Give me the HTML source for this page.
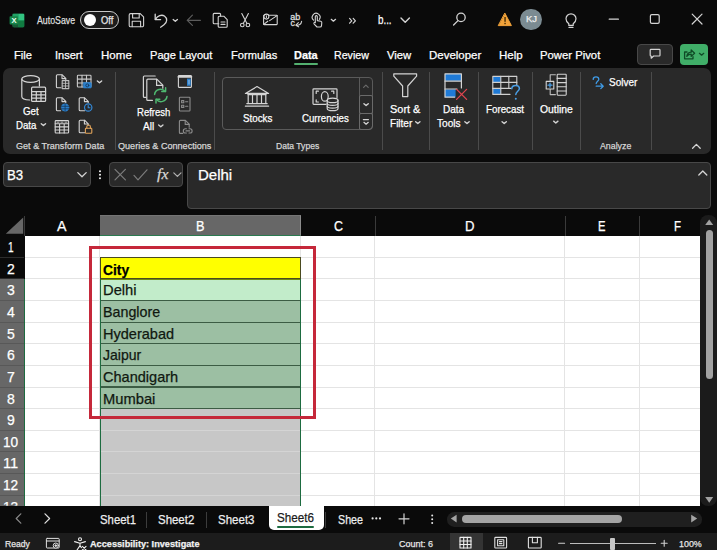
<!DOCTYPE html>
<html lang="en"><head><meta charset="utf-8"><title>Excel</title>
<style>
html,body{margin:0;padding:0;background:#0a0a0a;}
#app{position:relative;width:717px;height:550px;overflow:hidden;background:#0a0a0a;font-family:"Liberation Sans",sans-serif;}
#app div{position:absolute;box-sizing:border-box;}
.t{position:absolute;white-space:nowrap;transform-origin:0 50%;-webkit-text-stroke:0.25px currentColor;}
#ribbon{left:3px;top:67.6px;width:707.9px;height:86.5px;background:#292929;border-radius:7px;}
.sep{top:72px;width:1px;height:77.5px;background:#4b4b4b;}
#gallery{left:222px;top:77.4px;width:150.8px;height:52.8px;border:1px solid #5a5a5a;border-radius:4px;}
.box{background:#292929;border:1px solid #484848;border-radius:4px;}
#toggle{left:80.3px;top:11.4px;width:38.7px;height:17.8px;border:1.2px solid #c8c8c8;border-radius:9px;background:#1c1c1c;}
#knob{left:2.7px;top:1.7px;width:12.4px;height:12.4px;border-radius:6.2px;background:#fff;}
#share{left:680px;top:43.5px;width:28px;height:21.5px;background:#40ae68;border-radius:4px;}
#colhdr{left:0;top:214.6px;width:700px;height:21px;background:#0a0a0a;}
#grid{left:24.6px;top:235.6px;width:675.6px;height:270.2px;background:#fff;overflow:hidden;}
.gh{left:0;width:676px;height:1px;background:#e4e4e4;}
.gv{top:0;width:1px;height:271px;background:#e4e4e4;}
#rowhdr{left:0;top:235.6px;width:24.6px;height:270.2px;background:#0a0a0a;overflow:hidden;}
.rs{left:0;width:24.6px;background:#676767;border-right:1.3px solid #1d6b40;}
.rl{left:0;width:24px;height:1px;background:#2c2c2c;}
#tabbar{left:0;top:505.8px;width:717px;height:27.2px;background:#0a0a0a;}
#status{left:0;top:533px;width:717px;height:17px;background:#1c1c1c;}

</style></head>
<body>
<div id="app">
<!-- TITLE BAR -->
<div id="toggle"><div id="knob"></div></div>
<div id="avatar" style="left:520.4px;top:8.6px;width:21.4px;height:21.4px;border-radius:11px;background:#7b8b92;"></div>
<!-- TABS -->
<div id="dataline" style="left:294.3px;top:62.6px;width:23.8px;height:2px;background:#53b06f;border-radius:1px;"></div>
<div id="comment" class="box" style="left:636.8px;top:43.5px;width:36.2px;height:21.5px;"></div>
<div id="share"></div>
<!-- RIBBON -->
<div id="ribbon"></div>
<div class="sep" style="left:115px"></div>
<div class="sep" style="left:214.3px"></div>
<div class="sep" style="left:381.9px"></div>
<div class="sep" style="left:428.8px"></div>
<div class="sep" style="left:478.4px"></div>
<div class="sep" style="left:531.8px"></div>
<div class="sep" style="left:580.1px"></div>
<div class="sep" style="left:651.3px"></div>
<div id="gallery">
  <div style="left:136px;top:-1px;width:1px;height:52.8px;background:#5a5a5a"></div>
  <div style="left:136px;top:17px;width:13.8px;height:18.4px;border:1px solid #6a6a6a;border-radius:2px"></div>
  <div style="left:136px;top:34.4px;width:13.8px;height:17.4px;border:1px solid #6a6a6a;border-radius:2px 2px 4px 2px"></div>
</div>
<!-- FORMULA BAR -->
<div id="namebox" class="box" style="left:2.7px;top:162.3px;width:88.4px;height:24.6px;"></div>
<div id="fxbox" class="box" style="left:109.3px;top:162.3px;width:74.2px;height:24.6px;"></div>
<div id="formula" class="box" style="left:187.3px;top:162.3px;width:523.3px;height:46.4px;"></div>
<!-- SHEET -->
<div id="colhdr">
  <div style="left:99.8px;top:0;width:201.2px;height:21px;background:#676767;border-top:1px solid #757575;border-right:1px solid #8c8c8c;border-bottom:1.2px solid #2a7a50;"></div>
  <div style="left:24.2px;top:1px;width:1px;height:20px;background:#3a3a3a"></div>
  <div style="left:374.6px;top:1px;width:1px;height:20px;background:#3a3a3a"></div>
  <div style="left:564.6px;top:1px;width:1px;height:20px;background:#3a3a3a"></div>
  <div style="left:639.4px;top:1px;width:1px;height:20px;background:#3a3a3a"></div>
</div>
<div id="rowhdr">
  <div class="rs" style="top:43.3px;height:227px;"></div>
  <div class="rl" style="top:21.13px;background:#2c2c2c"></div><div class="rl" style="top:42.76px;background:#2c2c2c"></div><div class="rl" style="top:64.39px;background:#585858"></div><div class="rl" style="top:86.02px;background:#585858"></div><div class="rl" style="top:107.65px;background:#585858"></div><div class="rl" style="top:129.28px;background:#585858"></div><div class="rl" style="top:150.91px;background:#585858"></div><div class="rl" style="top:172.54px;background:#585858"></div><div class="rl" style="top:194.17px;background:#585858"></div><div class="rl" style="top:215.80px;background:#585858"></div><div class="rl" style="top:237.43px;background:#585858"></div><div class="rl" style="top:259.06px;background:#585858"></div>
</div>
<div id="grid">
  <div class="gh" style="top:21.13px"></div><div class="gh" style="top:42.76px"></div><div class="gh" style="top:64.39px"></div><div class="gh" style="top:86.02px"></div><div class="gh" style="top:107.65px"></div><div class="gh" style="top:129.28px"></div><div class="gh" style="top:150.91px"></div><div class="gh" style="top:172.54px"></div><div class="gh" style="top:194.17px"></div><div class="gh" style="top:215.80px"></div><div class="gh" style="top:237.43px"></div><div class="gh" style="top:259.06px"></div><div class="gv" style="left:74.90px"></div><div class="gv" style="left:275.90px"></div><div class="gv" style="left:349.90px"></div><div class="gv" style="left:539.90px"></div><div class="gv" style="left:614.90px"></div>
  <!-- selected column grey -->
  <div style="left:75.2px;top:43.3px;width:201.2px;height:227px;background:#c7c7c7;"></div>
  <div class="gh" style="top:172.54px;left:75.2px;width:201.2px;background:#d4d4d4"></div><div class="gh" style="top:194.17px;left:75.2px;width:201.2px;background:#d4d4d4"></div><div class="gh" style="top:215.80px;left:75.2px;width:201.2px;background:#d4d4d4"></div><div class="gh" style="top:237.43px;left:75.2px;width:201.2px;background:#d4d4d4"></div><div class="gh" style="top:259.06px;left:75.2px;width:201.2px;background:#d4d4d4"></div>
  <div style="left:75.2px;top:21.7px;width:201.2px;height:21.7px;background:#ffff00;border:1px solid #4a4a20;"></div>
  <div style="left:75.2px;top:43.3px;width:201.2px;height:21.8px;background:#c2ecca;border:1px solid #3c5c44;border-top-color:#6f8a10;"></div>
  <div style="left:75.2px;top:64.39px;width:201.2px;height:22.63px;background:#9cbfa3;border:1px solid #3c5c44;"></div><div style="left:75.2px;top:86.02px;width:201.2px;height:22.63px;background:#9cbfa3;border:1px solid #3c5c44;"></div><div style="left:75.2px;top:107.65px;width:201.2px;height:22.63px;background:#9cbfa3;border:1px solid #3c5c44;"></div><div style="left:75.2px;top:129.28px;width:201.2px;height:22.63px;background:#9cbfa3;border:1px solid #3c5c44;"></div><div style="left:75.2px;top:150.91px;width:201.2px;height:22.63px;background:#9cbfa3;border:1px solid #3c5c44;"></div>
  <div style="left:75.2px;top:43.3px;width:1.3px;height:227px;background:#1d6b40;"></div>
  <div style="left:275.4px;top:43.3px;width:1.3px;height:227px;background:#1d6b40;"></div>
  <div id="redbox" style="left:64.4px;top:10.6px;width:227px;height:172.6px;border:3px solid #c5283a;"></div>
</div>
<!-- V SCROLL -->
<div id="vscroll" style="left:700.2px;top:214.6px;width:16.8px;height:291.2px;background:#1b1b1b;border-radius:8px;">
  <div style="left:5.4px;top:15px;width:7.4px;height:149px;background:#a2a2a2;border-radius:4px;"></div>
</div>
<!-- TAB BAR -->
<div id="tabbar">
  <div style="left:146.2px;top:6px;width:1px;height:16px;background:#3c3c3c"></div>
  <div style="left:206px;top:6px;width:1px;height:16px;background:#3c3c3c"></div>
  <div style="left:324.6px;top:6px;width:1px;height:16px;background:#3c3c3c"></div>
  <div id="activetab" style="left:269.4px;top:-0.2px;width:55px;height:23.9px;background:#fff;border-radius:0 0 5px 5px;"></div>
  <div style="left:277.4px;top:19.9px;width:37px;height:2px;background:#1d6b40;border-radius:1px"></div>
  <div id="hscroll" style="left:446.5px;top:6.2px;width:255.5px;height:14.6px;background:#1f1f1f;border-radius:7.3px;">
    <div style="left:15px;top:3.2px;width:160.6px;height:7.6px;background:#a4a4a4;border-radius:4px;"></div>
  </div>
</div>
<!-- STATUS -->
<div id="status">
  <div style="left:449.6px;top:0;width:33.6px;height:18.2px;background:#343434"></div>
  <div style="left:569.6px;top:9.9px;width:86.6px;height:1px;background:#bdbdbd"></div>
  <div style="left:610.2px;top:5px;width:4.6px;height:12px;background:#c8c8c8;border-radius:1px"></div>
</div>
<svg id="icons" width="717" height="550" viewBox="0 0 717 550" style="position:absolute;left:0;top:0" fill="none" stroke="#d4d4d4" stroke-width="1.1" stroke-linecap="round" stroke-linejoin="round">
<!-- ===== title bar ===== -->
<g id="xl" stroke="none">
  <rect x="12.6" y="13.8" width="11.6" height="13.4" rx="1.4" fill="#21a366"/>
  <rect x="18.4" y="13.8" width="5.8" height="6.7" fill="#33c481"/>
  <rect x="18.4" y="20.5" width="5.8" height="6.7" fill="#107c41"/>
  <rect x="12.6" y="13.8" width="5.8" height="6.7" fill="#21a366"/>
  <rect x="12.6" y="20.5" width="5.8" height="6.7" fill="#185c37"/>
  <rect x="9.6" y="16.200" width="8.4" height="8.3" rx="0.9" fill="#17864a"/>
  <text x="14.1" y="23" font-family="Liberation Sans, sans-serif" font-weight="700" font-size="7.6" fill="#eafff2" text-anchor="middle">X</text>
</g>
<g id="save">
  <path d="M130.6 13.6h9.6l3.4 3.2v8.6a1.4 1.4 0 0 1-1.4 1.4h-11.6a1.4 1.4 0 0 1-1.4-1.4v-10.4a1.4 1.4 0 0 1 1.400-1.400z"/>
  <path d="M132.6 13.8v4.200h6.600v-4.200"/>
  <path d="M132.2 26.600v-5.400h8.400v5.400"/>
</g>
<g id="undo" stroke-width="1.3">
  <path d="M155.200 14.200v5.400h5.400"/>
  <path d="M155.400 19.400c2.200-3.600 6.200-5.200 9-3.400 3.200 2.200 3 6.400-0.400 8.800l-3.400 2.400"/>
</g>
<path d="M173.15 19.55l2.150 1.800 2.150-1.800" stroke-width="1.3"/>
<g id="redo" stroke="#5c5c5c" stroke-width="1.2">
  <path d="M187.400 20.300h13"/><path d="M192.400 15.200l-5.100 5.100 5.100 5.100"/>
</g>
<g id="paste">
  <path d="M218.800 23.800h-4.600a1 1 0 0 1-1-1v-8.400a1 1 0 0 1 1-1h5.400a1 1 0 0 1 1 1v1.600"/>
  <path d="M219.200 16.200h4.600l3.400 3.400v6.600a1 1 0 0 1-1 1h-7a1 1 0 0 1-1-1v-9a1 1 0 0 1 1-1z"/>
  <path d="M221 22h4M221 24.400h4"/>
</g>
<g id="cut">
  <path d="M241.800 13.600l5 9.600M248.400 13.600l-5 9.600"/>
  <circle cx="242.300" cy="25" r="1.800"/><circle cx="247.900" cy="25" r="1.800"/>
</g>
<g id="mail">
  <rect x="263.600" y="15.200" width="13.600" height="9.400" rx="0.600"/>
  <path d="M269.600 20.600l7.400-5M263.800 24.400l4-3.200"/>
  <circle cx="266.400" cy="16.600" r="2.500" fill="#0a0a0a"/><path d="M266.400 15.800v1.600"/>
</g>
<g id="abc" stroke="#d8d8d8" stroke-width="0.300" fill="#e0e0e0" font-family="Liberation Sans, sans-serif" font-size="8.800">
  <text x="290.200" y="19.900" textLength="10" lengthAdjust="spacingAndGlyphs">ab</text><text x="290.400" y="26.300">c</text>
</g>
<path d="M296.200 25.200c2.800 0.400 5-0.800 5.400-3.800M298.400 22.600l-2.600 2.600 2.800 1.600" stroke-width="1.100"/>
<g id="touch">
  <path d="M313.600 20.200a3.900 3.900 0 1 1 5.800-0.800"/>
  <path d="M315.300 22.800v-6.200a1 1 0 0 1 2 0v4l3.400 0.700a1.400 1.400 0 0 1 1.100 1.500l-0.300 2.800a1.500 1.500 0 0 1-1.500 1.400h-3l-3-3.200a0.900 0.900 0 0 1 1.300-1.200z"/>
</g>
<path d="M331.25 19.35l2.150 1.800 2.150-1.800" stroke-width="1.300"/>
<path d="M349.600 18.400l2.200 2.400-2.200 2.400M353.200 18.400l2.200 2.400-2.200 2.400" stroke-width="1.200"/>
<path d="M401 18l4.200 4.200 4.200-4.200" stroke-width="1.400"/>
<g id="search" stroke-width="1.300"><circle cx="461" cy="17.400" r="4.200"/><path d="M458 20.600l-4.400 4.400"/></g>
<g id="warn" stroke="none"><path d="M505 13.400l6.400 12.200h-12.800z" fill="#f2a33a" stroke="#f2a33a" stroke-width="1"/><rect x="504.400" y="17" width="1.300" height="4.800" fill="#3a2400"/><rect x="504.400" y="22.800" width="1.300" height="1.400" fill="#3a2400"/></g>
<g id="bulb" stroke-width="1.200"><path d="M568.800 23.800c-2-1.600-2.800-3-2.800-5a5 5 0 0 1 10 0c0 2-0.800 3.400-2.800 5v1.600h-4.400z"/><path d="M569 27.400h4"/></g>
<path d="M609.200 19.200h9.200" stroke-width="1.200"/>
<rect x="650.400" y="14.600" width="8.800" height="8.800" rx="1.400" stroke-width="1.200"/>
<path d="M692.200 14.200l9.800 9.800M702 14.200l-9.800 9.800" stroke-width="1.200"/>
<!-- comment / share -->
<path d="M651 49.400h8.200a0.800 0.800 0 0 1 0.800 0.800v5a0.800 0.800 0 0 1-0.800 0.800h-5.600l-2.400 2.200v-2.200h-0.200a0.800 0.800 0 0 1-0.800-0.800v-5a0.800 0.800 0 0 1 0.800-0.800z" stroke-width="1.200"/>
<g stroke="#0f4a26" stroke-width="1.300"><path d="M687 52h-2.400v6.800h8.400v-2.200"/><path d="M686.800 56.400c0.400-2.600 2-4 4.400-4.200v-2.200l3.400 3.200-3.400 3.200v-2.200c-1.800 0-3.200 0.600-4.400 2.200z"/><path d="M699.45 53.35l2.150 1.800 2.150-1.800"/></g>
<!-- ===== ribbon icons ===== -->
<g id="getdata" stroke-width="1.2">
  <ellipse cx="30.600" cy="79" rx="8.800" ry="3.300"/>
  <path d="M21.800 79v17.400c0 1.800 3.400 3.400 8 3.600M39.400 79v7"/>
  <rect x="31.600" y="87.200" width="14" height="14.200" rx="1" fill="#292929"/>
  <path d="M31.600 91.600h14M31.600 94.900h14M31.600 98.200h14M36.300 91.600v9.800M41 91.600v9.800"/>
</g>
<g id="fromtext"><path d="M61 87.800h-3.600a1 1 0 0 1-1-1v-11a1 1 0 0 1 1-1h4.800l3.600 3.600v1.800"/><path d="M62 75v3.600h3.600"/>
  <rect x="62.200" y="80.600" width="6.600" height="8" fill="#292929" stroke="#bdbdbd"/><path d="M62.200 83.300h6.600M62.200 86h6.600M65.500 80.600v8" stroke="#bdbdbd" stroke-width="0.900"/></g>
<g id="fromweb"><path d="M60.600 110.800h-3.200a1 1 0 0 1-1-1v-11a1 1 0 0 1 1-1h4.800l3.600 3.600v1"/><path d="M62 98v3.600h3.600"/>
  <circle cx="65.100" cy="107.500" r="3.700" fill="#2b7fcb" stroke="#2b7fcb" stroke-width="0.600"/><path d="M61.600 106.300h7M61.600 108.800h7M65.100 104v7" stroke="#14385c" stroke-width="0.800"/></g>
<g id="fromtable"><rect x="55.200" y="120.600" width="13.400" height="12.400" rx="0.800"/><path d="M55.200 123.800h13.400M55.200 126.900h13.400M55.200 130h13.400M59.600 123.800v9.200M64.200 123.800v9.200"/><path d="M57 122.200h2M61 122.200h2M65 122.200h2" stroke-width="0.800"/></g>
<g id="frompic"><rect x="77.400" y="75.200" width="13.600" height="11.800" rx="0.800" stroke="#c8c8c8"/><path d="M77.400 79.100h13.600M77.400 83h13.600M82 75.200v11.800M86.500 75.200v11.800" stroke="#c8c8c8"/>
  <rect x="83.300" y="82.600" width="8" height="5.400" rx="0.800" fill="#2b7fcb" stroke="#2b7fcb" stroke-width="0.600"/><circle cx="87.300" cy="85.400" r="1.500" stroke="#14385c" stroke-width="0.900"/></g>
<path d="M97.35 80.95l2.150 1.800 2.150-1.800" stroke-width="1.400"/>
<g id="recent"><path d="M84.600 110.800h-4.400a1 1 0 0 1-1-1v-11a1 1 0 0 1 1-1h4.400l3.600 3.600v1"/><path d="M84.400 98v3.600h3.600"/>
  <circle cx="88.200" cy="107.500" r="3.700" fill="#292929" stroke="#3388d6" stroke-width="1.200"/><path d="M88.200 105.500v2.200h1.800" stroke="#3388d6"/></g>
<g id="existing"><path d="M84.800 132.800h-4.600a1 1 0 0 1-1-1v-10.600a1 1 0 0 1 1-1h4.400l3.600 3.600v1.400"/><path d="M84.400 120.400v3.600h3.600"/>
  <rect x="85.400" y="128.200" width="6.400" height="5" rx="0.700" stroke="#e2a45a" fill="#292929"/><path d="M86.800 128.200v-1.400a1.800 1.800 0 0 1 3.600 0v1.400" stroke="#e2a45a"/></g>
<path d="M41.25 123.75l2.150 1.800 2.150-1.800" stroke-width="1.400"/>
<g id="refresh" stroke-width="1.200"><path d="M146 97.400h-1.600a1 1 0 0 1-1-1v-19.400a1 1 0 0 1 1-1h10.800"/>
  <path d="M152.400 100.400h-4.600a1 1 0 0 1-1-1v-19.200a1 1 0 0 1 1-1h9l6 6v3"/><path d="M156.600 79.400v6h6"/>
  <g stroke="#4fb870" stroke-width="1.500"><path d="M154.600 94.400a6 6 0 0 1 10.600-3M167 96.400a6 6 0 0 1-10.600 3"/><path d="M165.600 87.800v3.800h-3.800M156 103v-3.800h3.800"/></g></g>
<path d="M158.65 124.95l2.150 1.800 2.150-1.800" stroke-width="1.400"/>
<g id="qc"><rect x="178.400" y="75.600" width="13" height="11.800" rx="0.600"/><path d="M178.400 76.800h13" stroke-width="1.800"/><rect x="187" y="78.600" width="3.800" height="7.200" fill="#2b7fcb" stroke="none"/><path d="M189 80.400v3.600" stroke="#bcd4ea" stroke-width="0.800"/></g>
<g id="props" stroke="#8c8c8c"><rect x="179.400" y="97.200" width="10.600" height="13.800" rx="0.800"/><rect x="181.600" y="100.600" width="2.200" height="2.200"/><rect x="181.600" y="105.200" width="2.200" height="2.200"/><path d="M185.600 101.700h2.200M185.600 106.300h2.200"/></g>
<g id="links" stroke="#8c8c8c"><path d="M182.800 133.400h-2.400a1 1 0 0 1-1-1v-11a1 1 0 0 1 1-1h5l3.800 3.800v3"/><path d="M185.200 120.600v3.800h3.800"/>
  <path d="M186.400 128.800h-1a2.100 2.100 0 0 0 0 4.200h1M189 128.800h1a2.100 2.100 0 0 1 0 4.200h-1M186 130.900h3.600"/></g>
<g id="stocks" stroke-width="1.200"><path d="M245.400 93.400l11.600-6.800 11.600 6.800z"/><path d="M247.800 94.600h18.400M248.200 94.600v8.600M252.500 94.600v8.600M257 94.600v8.600M261.500 94.600v8.600M265.800 94.600v8.600"/><path d="M246.800 103.600h20.400M245.400 106.200h23.200" /></g>
<g id="curr" stroke-width="1.200"><path d="M326 104.400h-12.200a0.800 0.800 0 0 1-0.800-0.800v-14a0.800 0.800 0 0 1 0.800-0.800h22.400a0.800 0.800 0 0 1 0.800 0.800v8"/>
  <path d="M316.200 91.200h2.200M316.200 91.200v2.200M316.200 102v-2.200M316.200 102h2.200M333.800 91.200h-2.200M333.800 91.200v2.200"/>
  <ellipse cx="324.800" cy="96.400" rx="3.400" ry="4.800"/>
  <ellipse cx="332.600" cy="100.400" rx="5.400" ry="2.200" fill="#292929"/><path d="M327.200 100.400v8c0 1.200 2.400 2.200 5.400 2.200s5.400-1 5.400-2.200v-8"/><path d="M327.200 103.200c0 1.200 2.400 2.200 5.400 2.200s5.400-1 5.400-2.200M327.200 106c0 1.200 2.400 2.200 5.400 2.200s5.400-1 5.400-2.200"/></g>
<path d="M363.600 87.400l2.300-2.300 2.300 2.300" stroke="#6a6a6a" stroke-width="1.200"/>
<path d="M363.95 103.75l2.150 1.800 2.150-1.800" stroke-width="1.400"/>
<path d="M363.400 119.600h5M363.95 122.35l2.150 1.800 2.150-1.800" stroke-width="1.300"/>
<path d="M393.800 73.800h22.800v2.400l-8.800 9.800v10.600h-5.200v-10.600l-8.800-9.800z" stroke-width="1.200"/>
<path d="M415.65 121.75l2.150 1.800 2.150-1.800" stroke-width="1.400"/>
<g id="dtools"><rect x="445" y="73.800" width="16.400" height="7" fill="#1f7ad6" stroke="none"/><rect x="445" y="89.400" width="10.600" height="7.800" fill="#1f7ad6" stroke="none"/>
  <path d="M461.400 88v-14.200h-16.400v23.400h9.600" stroke-width="1.200"/><path d="M445 81.200h16.400M445 89h12" stroke-width="1.200"/>
  <path d="M456.600 89.400l10 10M466.600 89.400l-10 10" stroke="#e0454f" stroke-width="1.300"/></g>
<path d="M464.85 121.75l2.150 1.800 2.150-1.800" stroke-width="1.400"/>
<g id="forecast"><rect x="493" y="76.400" width="7.800" height="6" fill="#1f7ad6" stroke="none"/><rect x="493" y="88.600" width="7.800" height="5.800" fill="#1f7ad6" stroke="none"/>
  <path d="M510 94.400h-17.200v-18h24v8.400" stroke="#d0d0d0" stroke-width="1.100"/><path d="M492.800 82.400h24M492.800 88.400h18M500.800 76.400v18M508.800 76.400v12" stroke="#d0d0d0" stroke-width="1.100"/>
  <path d="M511.800 88.800c0-2.200 1.600-3.400 3.800-3.400s3.800 1.200 3.800 3.200c0 2.600-3.600 2.800-3.600 6" stroke="#4aa0e8" stroke-width="1.500"/><circle cx="515.800" cy="98.800" r="1" fill="#4aa0e8" stroke="none"/></g>
<path d="M502.05 121.75l2.150 1.800 2.150-1.800" stroke-width="1.400"/>
<g id="outline"><rect x="557.200" y="74.200" width="9" height="21" rx="0.600"/><path d="M557.200 78.400h9M557.200 82.600h9M557.200 86.800h9M557.200 91h9"/>
  <path d="M555.400 74.800h-5.200v6.400M550.200 89.200v5.400h5.200" stroke="#bdbdbd"/>
  <rect x="546.200" y="81.400" width="7.600" height="7.600" fill="#292929"/><path d="M548 85.200h4M550 83.200v4" stroke="#4aa0e8" stroke-width="1.300"/></g>
<path d="M553.65 121.15l2.150 1.800 2.150-1.800" stroke-width="1.400"/>
<g id="solver" stroke="#3f9be6" stroke-width="1.300"><path d="M593.200 79.400c0-1.600 1.200-2.600 2.800-2.600s2.800 1 2.800 2.400c0 1.800-2.600 2.200-2.600 4.400"/><path d="M596.200 86.200h7M600.800 83.800l2.400 2.400-2.400 2.400"/></g>
<path d="M692.600 148.200l3.800-3.800 3.800 3.800" stroke-width="1.300"/>

<!-- ===== formula bar ===== -->
<path d="M77.800 172.600l4.200 4.200 4.200-4.200" stroke-width="1.300"/>
<g stroke="none" fill="#ececec"><circle cx="100" cy="171.200" r="1.050"/><circle cx="100" cy="174.700" r="1.050"/><circle cx="100" cy="178.200" r="1.050"/></g>
<path d="M115 169.400l10.400 10.400M125.400 169.400l-10.400 10.400" stroke="#7c7c7c" stroke-width="1.200"/>
<path d="M134 175.400l4 4.400 9-10" stroke="#7c7c7c" stroke-width="1.200"/>
<path d="M173.800 172.800l3.600 3.600 3.600-3.600" stroke="#b4b4b4" stroke-width="1.200"/>
<path d="M698.800 175l4-4 4 4" stroke-width="1.300"/>
<!-- corner triangle -->
<path d="M23.200 217.400v16.400h-17.400z" fill="#676767" stroke="none"/>
<!-- v scroll arrows -->
<path d="M709.200 219.400l4 5.600h-8z" fill="#a2a2a2" stroke="none"/>
<path d="M709.200 502.800l4-5.800h-8z" fill="#a2a2a2" stroke="none"/>
<!-- tab bar -->
<path d="M20.800 513.800l-4.600 4.700 4.600 4.700" stroke="#8a8a8a" stroke-width="1.200"/>
<path d="M45 513.800l4.600 4.700-4.600 4.700" stroke="#e0e0e0" stroke-width="1.200"/>
<g stroke="none" fill="#e6e6e6"><circle cx="372.600" cy="518.400" r="1.100"/><circle cx="376.300" cy="518.400" r="1.100"/><circle cx="380" cy="518.400" r="1.100"/>
<circle cx="432.200" cy="515.600" r="1"/><circle cx="432.200" cy="519.300" r="1"/><circle cx="432.200" cy="523" r="1"/></g>
<path d="M399 518.800h10M404 513.800v10" stroke-width="1.200"/>
<path d="M456.600 514.800v7.600l-5.800-3.800z" fill="#a4a4a4" stroke="none"/>
<path d="M691.200 514.800v7.600l6-3.800z" fill="#a4a4a4" stroke="none"/>
<!-- status -->
<g stroke="#e0e0e0" stroke-width="1"><rect x="46.400" y="538.400" width="12.800" height="9.600" rx="0.800"/><path d="M46.400 541h12.800"/><circle cx="55.800" cy="545.600" r="2.600" fill="#1c1c1c"/><circle cx="55.800" cy="545.600" r="0.900" fill="#e0e0e0"/></g>
<g stroke="#f0f0f0" stroke-width="1.100"><circle cx="80" cy="539.200" r="1.500"/><path d="M74.600 541.600l5.400 1.600 5.400-1.600M80 543.200v2.400l-3 4.400M80 545.600l1.400 2"/><path d="M82.400 546.400l3.600 3.600M86 546.400l-3.600 3.600"/></g>
<g stroke="#f0f0f0" stroke-width="1.100"><rect x="460" y="537.400" width="11" height="10.600"/><path d="M463.700 537.400v10.600M467.300 537.400v10.600M460 541v0h11M460 544.500h11"/></g>
<g stroke="#e0e0e0" stroke-width="1.100"><rect x="494.800" y="537.400" width="11.800" height="10.600" rx="0.800"/><rect x="497.600" y="539.800" width="6.200" height="6"/><path d="M499.400 541.600h2.600M499.400 543.600h2.600"/></g>
<g stroke="#e0e0e0" stroke-width="1.100"><rect x="528.400" y="537.400" width="12.800" height="10.600" rx="0.800"/><path d="M532.400 537.400v5.400h5v-5.400"/></g>
<path d="M558.600 543.200h6M661.200 543.200h6M664.200 540.200v6" stroke="#cfcfcf" stroke-width="1.100"/>
</svg>


<div id="labels">
<span class="t" id="t0" style="left:37.20px;top:13.70px;height:14px;line-height:14px;font-size:10px;color:#dedede;transform:scaleX(0.8784);">AutoSave</span>
<span class="t" id="t1" style="left:100.60px;top:13.70px;height:14px;line-height:14px;font-size:10px;color:#e6e6e6;transform:scaleX(0.9349);">Off</span>
<span class="t" id="t2" style="left:378.00px;top:11.50px;height:17px;line-height:17px;font-size:12px;color:#fff;transform:scaleX(0.8150);">b...</span>
<span class="t" id="t3" style="left:525.50px;top:13.30px;height:12px;line-height:12px;font-size:8.5px;color:#f0f0f0;transform:scaleX(1.1087);">KJ</span>
<span class="t" id="t4" style="left:14.40px;top:47.00px;height:16px;line-height:16px;font-size:11.2px;color:#fff;transform:scaleX(0.9983);">File</span>
<span class="t" id="t5" style="left:55.20px;top:47.00px;height:16px;line-height:16px;font-size:11.2px;color:#fff;transform:scaleX(0.9863);">Insert</span>
<span class="t" id="t6" style="left:101.40px;top:47.00px;height:16px;line-height:16px;font-size:11.2px;color:#fff;transform:scaleX(1.0320);">Home</span>
<span class="t" id="t7" style="left:150.00px;top:47.00px;height:16px;line-height:16px;font-size:11.2px;color:#fff;transform:scaleX(0.9916);">Page Layout</span>
<span class="t" id="t8" style="left:230.70px;top:47.00px;height:16px;line-height:16px;font-size:11.2px;color:#fff;transform:scaleX(0.9930);">Formulas</span>
<span class="t" id="t9" style="left:334.40px;top:47.00px;height:16px;line-height:16px;font-size:11.2px;color:#fff;transform:scaleX(0.9513);">Review</span>
<span class="t" id="t10" style="left:387.00px;top:47.00px;height:16px;line-height:16px;font-size:11.2px;color:#fff;transform:scaleX(1.0064);">View</span>
<span class="t" id="t11" style="left:428.70px;top:47.00px;height:16px;line-height:16px;font-size:11.2px;color:#fff;transform:scaleX(1.0255);">Developer</span>
<span class="t" id="t12" style="left:498.70px;top:47.00px;height:16px;line-height:16px;font-size:11.2px;color:#fff;transform:scaleX(1.0297);">Help</span>
<span class="t" id="t13" style="left:540.00px;top:47.00px;height:16px;line-height:16px;font-size:11.2px;color:#fff;transform:scaleX(1.0100);">Power Pivot</span>
<span class="t" id="t14" style="left:294.30px;top:47.00px;height:16px;line-height:16px;font-size:11.2px;color:#fff;font-weight:700;transform:scaleX(0.9773);">Data</span>
<span class="t" id="t15" style="left:23.30px;top:103.60px;height:15px;line-height:15px;font-size:11px;color:#fff;transform:scaleX(0.8853);">Get</span>
<span class="t" id="t16" style="left:16.20px;top:117.60px;height:15px;line-height:15px;font-size:11px;color:#fff;transform:scaleX(0.8774);">Data</span>
<span class="t" id="t17" style="left:136.80px;top:105.00px;height:15px;line-height:15px;font-size:11px;color:#fff;transform:scaleX(0.8668);">Refresh</span>
<span class="t" id="t18" style="left:142.80px;top:118.60px;height:15px;line-height:15px;font-size:11px;color:#fff;transform:scaleX(0.9155);">All</span>
<span class="t" id="t19" style="left:243.00px;top:111.30px;height:15px;line-height:15px;font-size:11px;color:#fff;transform:scaleX(0.8905);">Stocks</span>
<span class="t" id="t20" style="left:301.50px;top:111.30px;height:15px;line-height:15px;font-size:11px;color:#fff;transform:scaleX(0.8799);">Currencies</span>
<span class="t" id="t21" style="left:390.40px;top:101.80px;height:15px;line-height:15px;font-size:11px;color:#fff;transform:scaleX(0.9942);">Sort &amp;</span>
<span class="t" id="t22" style="left:389.70px;top:115.60px;height:15px;line-height:15px;font-size:11px;color:#fff;transform:scaleX(0.9119);">Filter</span>
<span class="t" id="t23" style="left:443.30px;top:101.80px;height:15px;line-height:15px;font-size:11px;color:#fff;transform:scaleX(0.9118);">Data</span>
<span class="t" id="t24" style="left:436.60px;top:115.60px;height:15px;line-height:15px;font-size:11px;color:#fff;transform:scaleX(0.9187);">Tools</span>
<span class="t" id="t25" style="left:486.00px;top:101.80px;height:15px;line-height:15px;font-size:11px;color:#fff;transform:scaleX(0.8879);">Forecast</span>
<span class="t" id="t26" style="left:539.70px;top:101.60px;height:15px;line-height:15px;font-size:11px;color:#fff;transform:scaleX(0.9438);">Outline</span>
<span class="t" id="t27" style="left:608.80px;top:75.30px;height:15px;line-height:15px;font-size:11px;color:#fff;transform:scaleX(0.9106);">Solver</span>
<span class="t" id="t28" style="left:16.40px;top:139.30px;height:13px;line-height:13px;font-size:9.6px;color:#d6d6d6;transform:scaleX(0.9452);">Get &amp; Transform Data</span>
<span class="t" id="t29" style="left:117.80px;top:139.30px;height:13px;line-height:13px;font-size:9.6px;color:#d6d6d6;transform:scaleX(0.9467);">Queries &amp; Connections</span>
<span class="t" id="t30" style="left:276.20px;top:139.30px;height:13px;line-height:13px;font-size:9.6px;color:#d6d6d6;transform:scaleX(0.8933);">Data Types</span>
<span class="t" id="t31" style="left:600.00px;top:139.30px;height:13px;line-height:13px;font-size:9.6px;color:#d6d6d6;transform:scaleX(0.9168);">Analyze</span>
<span class="t" id="t32" style="left:7.40px;top:165.30px;height:20px;line-height:20px;font-size:14px;color:#fff;transform:scaleX(0.9460);">B3</span>
<span class="t" id="t33" style="left:198.00px;top:165.30px;height:20px;line-height:20px;font-size:14px;color:#fff;transform:scaleX(1.0719);">Delhi</span>
<span class="t" id="t34" style="left:157.00px;top:164.10px;height:21px;line-height:21px;font-size:15px;color:#d8d8d8;font-family:'Liberation Serif',serif;font-style:italic;transform:scaleX(1.0528);">fx</span>
<span class="t" id="t35" style="left:57.25px;top:216.00px;height:20px;line-height:20px;font-size:14.5px;color:#fff;transform:scaleX(0.9822);">A</span>
<span class="t" id="t36" style="left:195.75px;top:216.00px;height:20px;line-height:20px;font-size:14.5px;color:#fff;transform:scaleX(0.8788);">B</span>
<span class="t" id="t37" style="left:333.50px;top:216.00px;height:20px;line-height:20px;font-size:14.5px;color:#fff;transform:scaleX(0.8584);">C</span>
<span class="t" id="t38" style="left:465.25px;top:216.00px;height:20px;line-height:20px;font-size:14.5px;color:#fff;transform:scaleX(0.9061);">D</span>
<span class="t" id="t39" style="left:598.25px;top:216.00px;height:20px;line-height:20px;font-size:14.5px;color:#fff;transform:scaleX(0.7754);">E</span>
<span class="t" id="t40" style="left:673.50px;top:216.00px;height:20px;line-height:20px;font-size:14.5px;color:#fff;transform:scaleX(0.7901);">F</span>
<span class="t" id="t41" style="left:8.00px;top:237.12px;height:20px;line-height:20px;font-size:14.5px;color:#fff;transform:scaleX(0.6932);">1</span>
<span class="t" id="t42" style="left:6.90px;top:258.75px;height:20px;line-height:20px;font-size:14.5px;color:#fff;transform:scaleX(0.9656);">2</span>
<span class="t" id="t43" style="left:6.90px;top:280.38px;height:20px;line-height:20px;font-size:14.5px;color:#fff;transform:scaleX(0.9656);">3</span>
<span class="t" id="t44" style="left:6.90px;top:302.00px;height:20px;line-height:20px;font-size:14.5px;color:#fff;transform:scaleX(0.9656);">4</span>
<span class="t" id="t45" style="left:6.90px;top:323.63px;height:20px;line-height:20px;font-size:14.5px;color:#fff;transform:scaleX(0.9656);">5</span>
<span class="t" id="t46" style="left:6.90px;top:345.26px;height:20px;line-height:20px;font-size:14.5px;color:#fff;transform:scaleX(0.9656);">6</span>
<span class="t" id="t47" style="left:6.90px;top:366.89px;height:20px;line-height:20px;font-size:14.5px;color:#fff;transform:scaleX(0.9656);">7</span>
<span class="t" id="t48" style="left:6.90px;top:388.52px;height:20px;line-height:20px;font-size:14.5px;color:#fff;transform:scaleX(0.9656);">8</span>
<span class="t" id="t49" style="left:6.90px;top:410.15px;height:20px;line-height:20px;font-size:14.5px;color:#fff;transform:scaleX(0.9656);">9</span>
<span class="t" id="t50" style="left:3.20px;top:431.78px;height:20px;line-height:20px;font-size:14.5px;color:#fff;transform:scaleX(0.9417);">10</span>
<span class="t" id="t51" style="left:3.20px;top:453.41px;height:20px;line-height:20px;font-size:14.5px;color:#fff;transform:scaleX(1.0091);">11</span>
<span class="t" id="t52" style="left:3.20px;top:475.04px;height:20px;line-height:20px;font-size:14.5px;color:#fff;transform:scaleX(0.9417);">12</span>
<span class="t" id="t53" style="left:3.20px;top:496.67px;height:20px;line-height:20px;font-size:14.5px;color:#fff;clip-path:inset(0 0 10.87px 0);transform:scaleX(0.9417);">13</span>
<span class="t" id="t54" style="left:103.10px;top:258.94px;height:21px;line-height:21px;font-size:15px;color:#000;font-weight:700;transform:scaleX(0.9208);">City</span>
<span class="t" id="t55" style="left:103.10px;top:279.38px;height:21px;line-height:21px;font-size:15px;color:#101810;transform:scaleX(0.9828);">Delhi</span>
<span class="t" id="t56" style="left:103.10px;top:301.00px;height:21px;line-height:21px;font-size:15px;color:#101810;transform:scaleX(0.9509);">Banglore</span>
<span class="t" id="t57" style="left:103.10px;top:322.63px;height:21px;line-height:21px;font-size:15px;color:#101810;transform:scaleX(0.9688);">Hyderabad</span>
<span class="t" id="t58" style="left:103.10px;top:344.26px;height:21px;line-height:21px;font-size:15px;color:#101810;transform:scaleX(0.9349);">Jaipur</span>
<span class="t" id="t59" style="left:103.10px;top:365.89px;height:21px;line-height:21px;font-size:15px;color:#101810;transform:scaleX(0.9695);">Chandigarh</span>
<span class="t" id="t60" style="left:103.10px;top:387.52px;height:21px;line-height:21px;font-size:15px;color:#101810;transform:scaleX(0.9820);">Mumbai</span>
<span class="t" id="t61" style="left:99.90px;top:509.90px;height:19px;line-height:19px;font-size:13.5px;color:#eee;transform:scaleX(0.8412);">Sheet1</span>
<span class="t" id="t62" style="left:158.20px;top:509.90px;height:19px;line-height:19px;font-size:13.5px;color:#eee;transform:scaleX(0.8482);">Sheet2</span>
<span class="t" id="t63" style="left:217.50px;top:509.90px;height:19px;line-height:19px;font-size:13.5px;color:#eee;transform:scaleX(0.8529);">Sheet3</span>
<span class="t" id="t64" style="left:277.40px;top:508.10px;height:19px;line-height:19px;font-size:13.5px;color:#1a1a1a;transform:scaleX(0.8645);">Sheet6</span>
<span class="t" id="t65" style="left:337.60px;top:509.90px;height:19px;line-height:19px;font-size:13.5px;color:#eee;transform:scaleX(0.7929);">Shee</span>
<span class="t" id="t66" style="left:5.20px;top:537.20px;height:13px;line-height:13px;font-size:9.4px;color:#e6e6e6;transform:scaleX(0.9148);">Ready</span>
<span class="t" id="t67" style="left:89.80px;top:537.20px;height:13px;line-height:13px;font-size:9.4px;color:#f2f2f2;font-weight:700;transform:scaleX(0.9774);">Accessibility: Investigate</span>
<span class="t" id="t68" style="left:399.00px;top:537.20px;height:13px;line-height:13px;font-size:9.4px;color:#e6e6e6;transform:scaleX(0.9590);">Count: 6</span>
<span class="t" id="t69" style="left:679.00px;top:537.20px;height:13px;line-height:13px;font-size:9.4px;color:#e6e6e6;transform:scaleX(0.9506);">100%</span>
</div>
</div>
</body></html>
